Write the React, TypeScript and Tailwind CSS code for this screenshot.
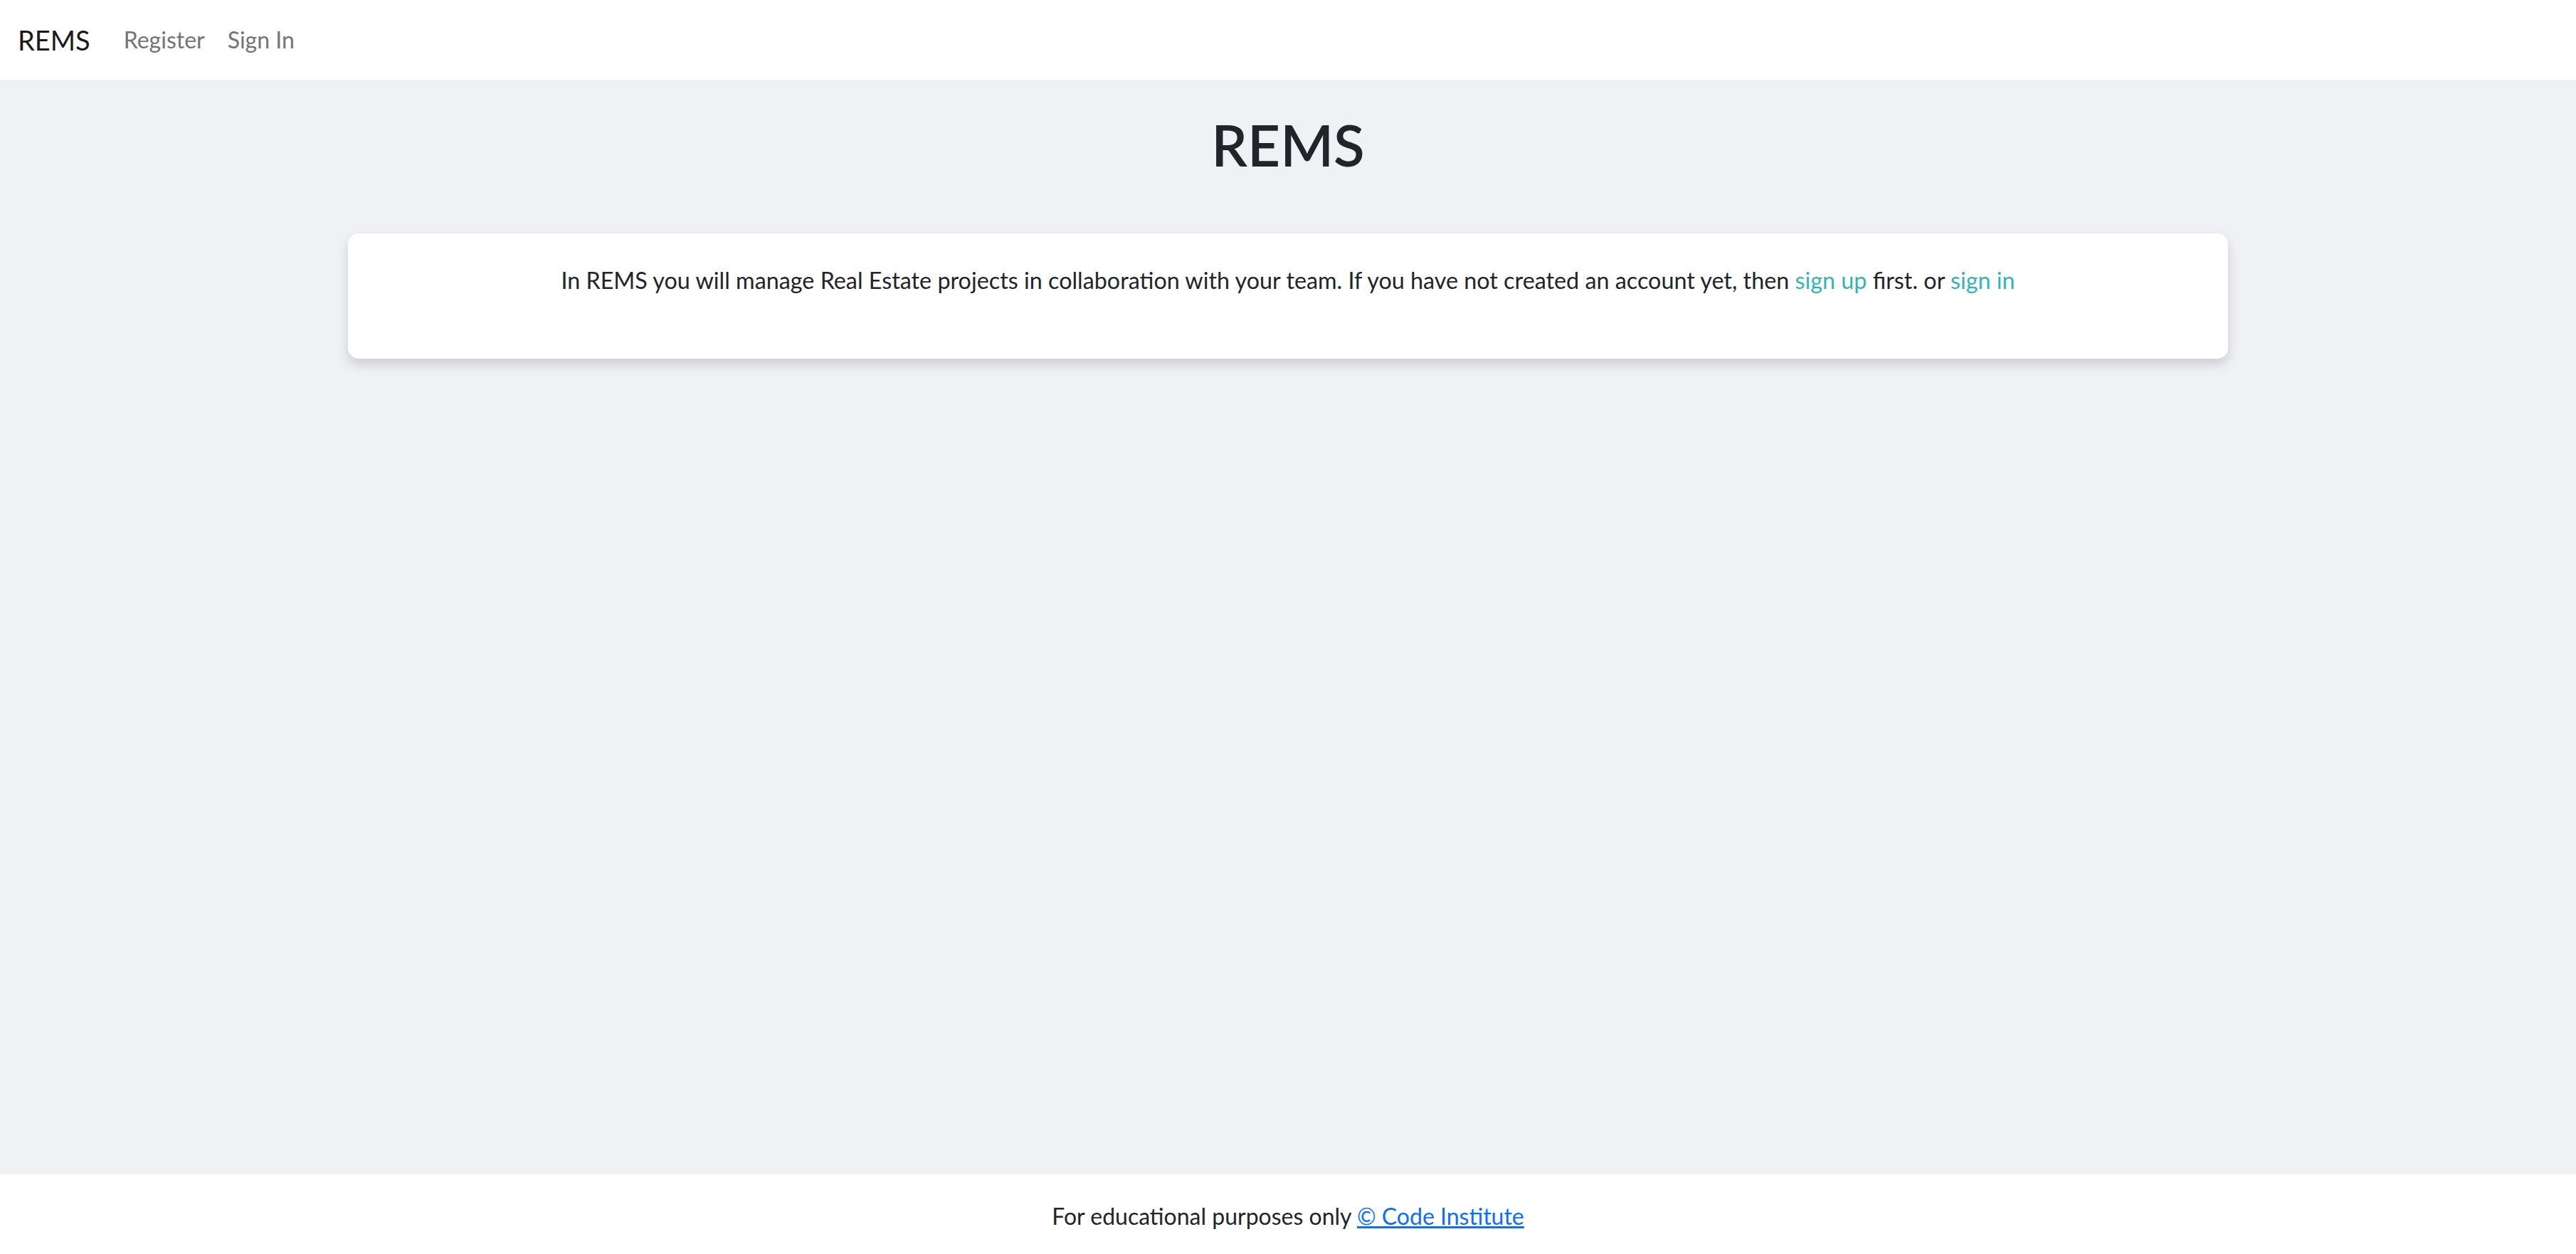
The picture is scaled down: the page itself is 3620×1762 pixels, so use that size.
export default function App() {
  return (
    <div className="flex min-h-[1762px] flex-col bg-[#f0f1f5] font-['Lato','Noto_Sans',sans-serif] text-[#212529]">
      <nav className="flex h-[112px] items-center bg-white px-[25px]">
        <a href="#" className="mr-[47px] text-[38px] text-[#1a1a1a]">REMS</a>
        <div className="flex gap-[32px] text-[32px] text-[#747474]">
          <a href="#">Register</a>
          <a href="#">Sign In</a>
        </div>
      </nav>

      <main className="flex flex-1 flex-col items-center">
        <h1 className="mt-[51px] mb-[85px] text-[80px] leading-none font-semibold">REMS</h1>
        <div className="w-[2642px] rounded-[15px] bg-white px-[40px] pt-[42px] pb-[86px] text-center text-[32.3px] leading-[48px] shadow-[0_8px_16px_rgba(0,0,0,0.15)]">
          In REMS you will manage Real Estate projects in collaboration with your team. If you have not created an account yet, then{' '}
          <a href="#" className="text-[#33b5b5]">sign up</a> first. or{' '}
          <a href="#" className="text-[#33b5b5]">sign in</a>
        </div>
      </main>

      <footer className="flex h-[112px] items-center justify-center bg-white pt-[6px] text-[32px]">
        <span>
          For educational purposes only{' '}
          <a href="#" className="text-[#0d6efd] underline">© Code Institute</a>
        </span>
      </footer>
    </div>
  );
}
